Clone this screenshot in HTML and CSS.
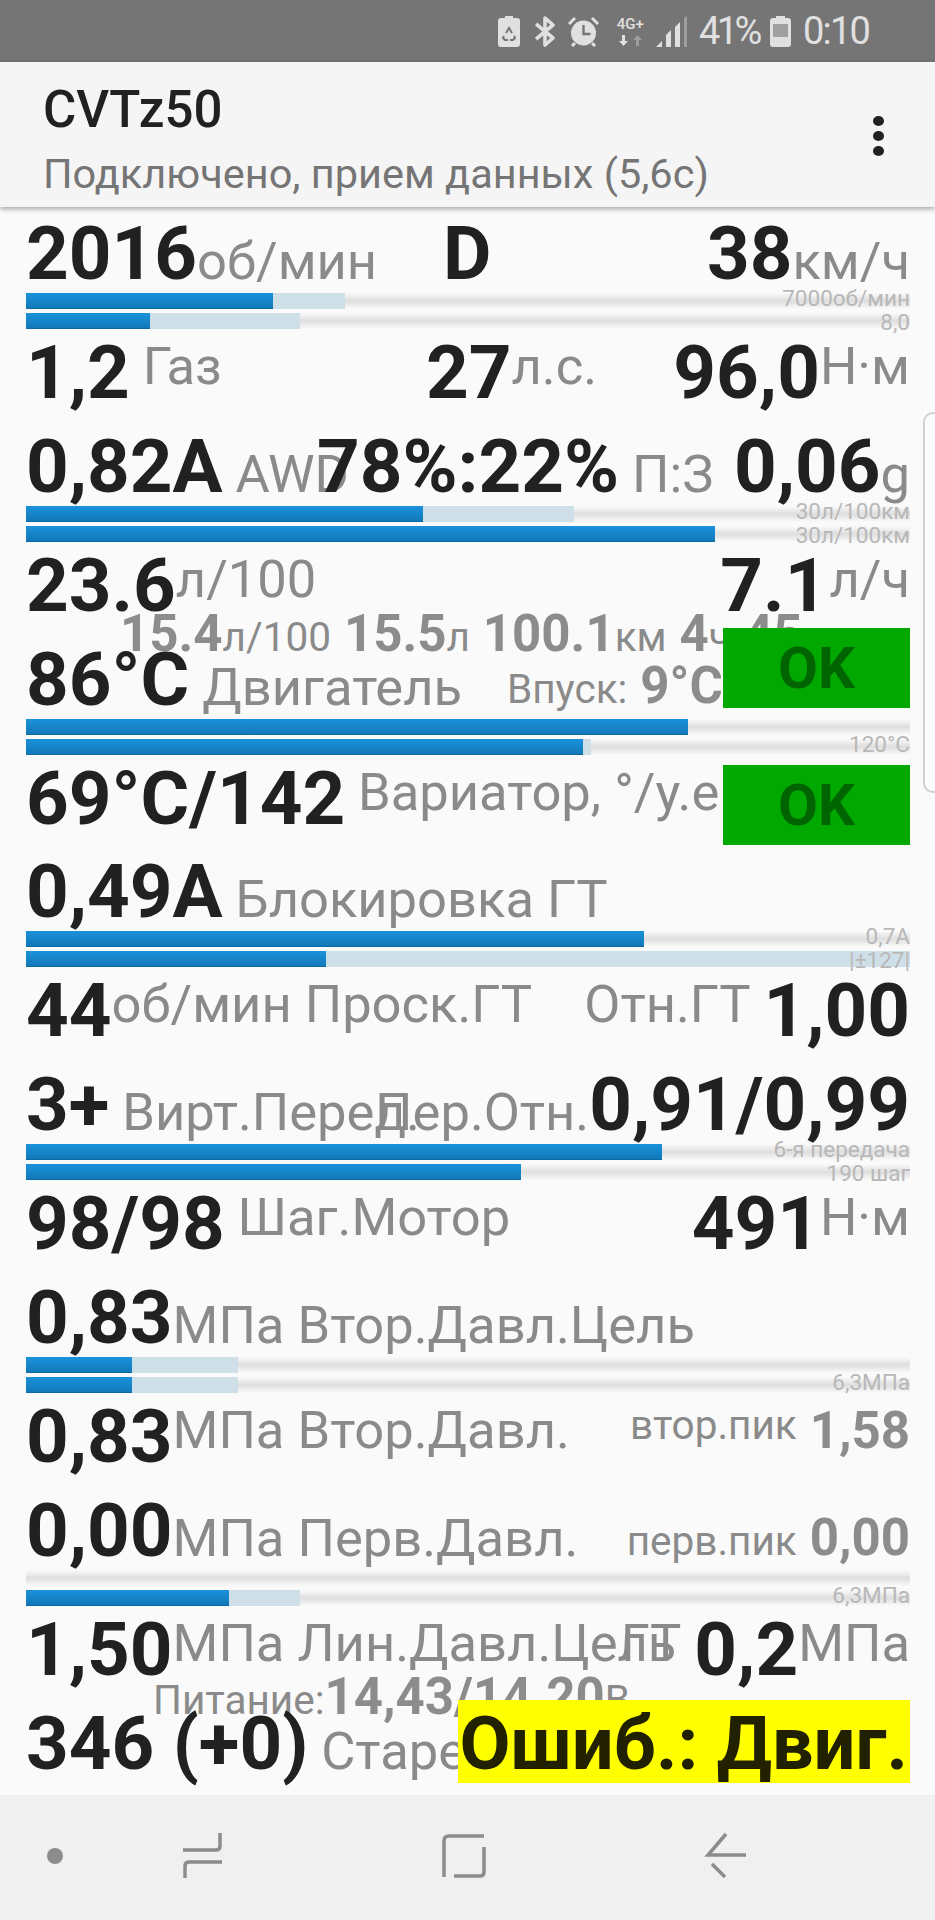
FILE: index.html
```html
<!DOCTYPE html>
<html lang="ru">
<head>
  <meta charset="UTF-8">
  <meta name="viewport" content="width=device-width, initial-scale=1.0">
  <title>CVTz50</title>
  <link rel="stylesheet" href="styles.css">
</head>
<body>
  <div class="statusbar">
    <svg class="st-recycle" width="22" height="31" viewBox="0 0 22 31">
      <path fill="#e0e0e0" d="M7 0h8v2h4q3 0 3 3v23q0 3-3 3H3q-3 0-3-3V5q0-3 3-3h4z"/>
      <path fill="none" stroke="#757575" stroke-width="2" d="M8 17l3-5 3 5M6 20l-1 2 2 2h3M16 20l1 2-2 2h-3"/>
    </svg>
    <svg class="st-bt" width="20" height="31" viewBox="0 0 20 31">
      <path fill="none" stroke="#e0e0e0" stroke-width="3.6" stroke-linejoin="round" d="M1 8l17 14-8 7V2l8 7L1 23"/>
    </svg>
    <svg class="st-alarm" width="31" height="31" viewBox="0 0 31 31">
      <circle cx="15.5" cy="17" r="12.5" fill="#e0e0e0"/>
      <path fill="none" stroke="#e0e0e0" stroke-width="3" d="M1 8l6-6M30 8l-6-6M4 30l3-3M27 30l-3-3"/>
      <path fill="none" stroke="#757575" stroke-width="2.4" d="M15.5 9v9h7"/>
    </svg>
    <div class="st-net">
      <span class="st-net-label">4G+</span>
      <svg width="24" height="11" viewBox="0 0 24 11">
        <path fill="#e0e0e0" d="M4 0h3v6h3l-4.500 5L1 6h3z"/>
        <path fill="#9e9e9e" d="M18 11h3V5h3l-4.500-5L15 5h3z"/>
      </svg>
    </div>
    <svg class="st-signal" width="31" height="31" viewBox="0 0 31 31">
      <path fill="#e0e0e0" d="M0 31l6-6v6zM10 31V19l5-5v17zM19 31V11l5-5v25z"/>
      <path fill="#9e9e9e" d="M28 31V2l3-2v31z"/>
    </svg>
    <span class="st-text st-pct">41%</span>
    <svg class="st-batt" width="21" height="31" viewBox="0 0 21 31">
      <path fill="#e0e0e0" d="M6 0h9v2h3q3 0 3 3v23q0 3-3 3H3q-3 0-3-3V5q0-3 3-3h3z"/>
      <rect x="3" y="8" width="15" height="13" fill="#a0a0a0"/>
    </svg>
    <span class="st-text st-time">0:10</span>
  </div>

  <header class="appbar">
    <div class="app-titles">
      <div class="app-title">CVTz50</div>
      <div class="app-sub">Подключено, прием данных (5,6с)</div>
    </div>
    <div class="menu-dots"><i></i><i></i><i></i></div>
  </header>

  <main class="board">
    <div class="row">
      <div class="cell"><b class="val">2016</b><span class="unit">об/мин</span></div>
      <div class="cell gear"><b class="val">D</b></div>
      <div class="cell right"><b class="val">38</b><span class="unit">км/ч</span></div>
    </div>
    <div class="bars">
      <div class="bar"><div class="bar-second" style="width:36.1%"></div><div class="bar-fill" style="width:27.9%"></div><span class="bar-label">7000об/мин</span></div>
      <div class="bar"><div class="bar-second" style="width:31%"></div><div class="bar-fill" style="width:14%"></div><span class="bar-label low">8,0</span></div>
    </div>

    <div class="row gap up">
      <div class="cell"><b class="val">1,2</b> <span class="unit">Газ</span></div>
      <div class="cell power"><b class="val">27</b><span class="unit">л.с.</span></div>
      <div class="cell right"><b class="val">96,0</b><span class="unit">Н·м</span></div>
    </div>

    <div class="row">
      <div class="cell"><b class="val">0,82A</b> <span class="unit">AWD</span></div>
      <div class="cell split"><b class="val">78%:22%</b> <span class="unit">П:З</span></div>
      <div class="cell right"><b class="val">0,06</b><span class="unit">g</span></div>
    </div>
    <div class="bars">
      <div class="bar"><div class="bar-second" style="width:62%"></div><div class="bar-fill" style="width:44.9%"></div><span class="bar-label">30л/100км</span></div>
      <div class="bar"><div class="bar-fill" style="width:77.9%"></div><span class="bar-label low">30л/100км</span></div>
    </div>

    <div class="row gap up">
      <div class="cell"><b class="val">23.6</b><span class="unit">л/100</span></div>
      <div class="cell right"><b class="val">7.1</b><span class="unit tight">л/ч</span></div>
      <div class="cell trip"><b class="val-sm">15.4</b><span class="unit-sm">л/100</span> <b class="val-sm">15.5</b><span class="unit-sm">л</span> <b class="val-sm">100.1</b><span class="unit-sm">км</span> <b class="val-sm">4</b><span class="unit-sm">ч</span> <b class="val-sm">45</b></div>
    </div>

    <div class="row">
      <div class="cell"><b class="val">86°C</b> <span class="unit">Двигатель</span></div>
      <div class="cell intake"><span class="unit-sm">Впуск:</span> <b class="val-sm">9°C</b></div>
      <div class="status-ok first">OK</div>
    </div>
    <div class="bars">
      <div class="bar"><div class="bar-fill" style="width:74.9%"></div></div>
      <div class="bar"><div class="bar-second" style="width:63.9%"></div><div class="bar-fill" style="width:63%"></div><span class="bar-label">120°C</span></div>
    </div>

    <div class="row gap up">
      <div class="cell"><b class="val">69°C/142</b> <span class="unit">Вариатор, °/у.е</span></div>
      <div class="status-ok second">OK</div>
    </div>

    <div class="row">
      <div class="cell"><b class="val">0,49A</b> <span class="unit">Блокировка ГТ</span></div>
    </div>
    <div class="bars">
      <div class="bar"><div class="bar-fill" style="width:69.9%"></div><span class="bar-label">0,7A</span></div>
      <div class="bar"><div class="bar-second" style="width:100%"></div><div class="bar-fill" style="width:33.9%"></div><span class="bar-label low">|±127|</span></div>
    </div>

    <div class="row gap up">
      <div class="cell"><b class="val">44</b><span class="unit">об/мин Проск.ГТ</span></div>
      <div class="cell right"><span class="unit">Отн.ГТ</span> <b class="val">1,00</b></div>
    </div>

    <div class="row">
      <div class="cell"><b class="val">3+</b> <span class="unit">Вирт.Перед.</span></div>
      <div class="cell right"><span class="unit">Пер.Отн.</span><b class="val">0,91/0,99</b></div>
    </div>
    <div class="bars">
      <div class="bar"><div class="bar-fill" style="width:71.9%"></div><span class="bar-label">6-я передача</span></div>
      <div class="bar"><div class="bar-fill" style="width:56%"></div><span class="bar-label low">190 шаг</span></div>
    </div>

    <div class="row gap up">
      <div class="cell"><b class="val">98/98</b> <span class="unit">Шаг.Мотор</span></div>
      <div class="cell right"><b class="val">491</b><span class="unit">Н·м</span></div>
    </div>

    <div class="row">
      <div class="cell"><b class="val">0,83</b><span class="unit">МПа Втор.Давл.Цель</span></div>
    </div>
    <div class="bars">
      <div class="bar"><div class="bar-second" style="width:24%"></div><div class="bar-fill" style="width:12%"></div></div>
      <div class="bar"><div class="bar-second" style="width:24%"></div><div class="bar-fill" style="width:12%"></div><span class="bar-label">6,3МПа</span></div>
    </div>

    <div class="row gap up">
      <div class="cell"><b class="val">0,83</b><span class="unit">МПа Втор.Давл.</span></div>
      <div class="cell right peak-up"><span class="unit-sm">втор.пик</span> <b class="val-sm">1,58</b></div>
    </div>

    <div class="row">
      <div class="cell"><b class="val">0,00</b><span class="unit">МПа Перв.Давл.</span></div>
      <div class="cell right peak-low"><span class="unit-sm">перв.пик</span> <b class="val-sm">0,00</b></div>
    </div>
    <div class="bars">
      <div class="bar"></div>
      <div class="bar"><div class="bar-second" style="width:31%"></div><div class="bar-fill" style="width:23%"></div><span class="bar-label">6,3МПа</span></div>
    </div>

    <div class="row gap up">
      <div class="cell"><b class="val">1,50</b><span class="unit">МПа Лин.Давл.Цель</span></div>
      <div class="cell right"><span class="unit">ГТ</span> <b class="val">0,2</b><span class="unit">МПа</span></div>
      <div class="cell power-line"><span class="unit-sm">Питание:</span><b class="val-sm">14,43/14.20</b><span class="unit-sm">В</span></div>
    </div>

    <div class="row">
      <div class="cell"><b class="val">346 (+0)</b> <span class="unit">Старение</span></div>
      <div class="status-err">Ошиб.: Двиг.</div>
    </div>
  </main>

  <div class="edge-handle"></div>

  <nav class="navbar">
    <svg width="935" height="125" viewBox="0 0 935 125">
      <circle cx="55" cy="61" r="8" fill="#8c8c8c"/>
      <g fill="none" stroke="#8c8c8c" stroke-width="3.500">
        <path d="M220 38V51q0 4-4 4H183M222 67H189q-4 0-4 4V83"/>
        <path d="M444 82V46q0-5 5-5H484M484 52V77q0 4-4 4H454"/>
        <path d="M726 39L708 60H746M712 69L725 82"/>
      </g>
    </svg>
  </nav>
</body>
</html>
```

FILE: styles.css
```css
* {
  box-sizing: border-box;
}
html, body {
  margin: 0;
  padding: 0;
}
body {
  width: 935px;
  height: 1920px;
  overflow: hidden;
  position: relative;
  display: flex;
  flex-direction: column;
  font-family: Roboto, "Liberation Sans", sans-serif;
  background: #fafafa;
  color: #212121;
}

/* status bar */
.statusbar {
  height: 62px;
  background: #757575;
  display: flex;
  align-items: center;
  justify-content: flex-end;
  padding: 0 66px 0 0;
  color: #e0e0e0;
}
.statusbar > * { flex-shrink: 0; }
.st-recycle { margin-right: 15px; }
.st-bt { margin-right: 13px; }
.st-alarm { margin-right: 15px; }
.st-net {
  width: 33px;
  margin-right: 9px;
  display: flex;
  flex-direction: column;
  align-items: center;
  gap: 4px;
}
.st-net-label {
  font-size: 15px;
  line-height: 14px;
  font-weight: 500;
}
.st-signal { margin-right: 12px; }
.st-text {
  font-size: 38px;
  line-height: 62px;
  letter-spacing: -1.8px;
}
.st-pct {
  margin-right: 11px;
  letter-spacing: -3.5px;
}
.st-batt { margin-right: 12px; }

/* app bar */
.appbar {
  height: 145px;
  background: #f5f5f5;
  box-shadow: 0 2px 5px rgba(0, 0, 0, 0.35);
  padding: 0 51px 0 43px;
  display: flex;
  justify-content: space-between;
  align-items: center;
  position: relative;
  z-index: 2;
}
.app-titles {
  padding-top: 7px;
}
.app-title {
  font-size: 51px;
  font-weight: 500;
  line-height: 64px;
  margin-top: 3px;
}
.app-sub {
  font-size: 41.5px;
  line-height: 56px;
  color: #757575;
  margin-top: 4px;
}
.menu-dots {
  display: flex;
  flex-direction: column;
  gap: 5px;
  margin-top: 2px;
}
.menu-dots i {
  display: block;
  width: 11px;
  height: 10px;
  border-radius: 50%;
  background: #212121;
}

/* board */
.board {
  flex: 1;
  padding: 3px 25px 0 26px;
}
.row {
  display: grid;
  height: 83px;
}
.row.gap {
  margin-bottom: 10.8px;
}
.cell {
  grid-area: 1 / 1;
  justify-self: start;
  white-space: nowrap;
  line-height: 87px;
  font-size: 52px;
}
.cell.right { justify-self: end; }
.gear { margin-left: 417px; }
.power { margin-left: 400px; }
.split { margin-left: 291px; }
.intake { margin-left: 481px; }
.trip {
  margin-left: 94px;
  margin-top: 48px;
}
.power-line {
  margin-left: 127px;
  margin-top: 47px;
}
.val {
  font-size: 74.5px;
  font-weight: 700;
  color: #212121;
}
.unit {
  font-size: 52.5px;
  line-height: 1;
  color: #8a8a8a;
}
.up .unit {
  vertical-align: 14px;
}
.unit.tight {
  margin-left: 2px;
}
.val-sm {
  font-size: 51px;
  font-weight: 700;
  line-height: 1;
  color: #8c8c8c;
}
.unit-sm {
  font-size: 40.5px;
  line-height: 1;
  color: #8a8a8a;
}
.intake .unit-sm,
.intake .val-sm {
  vertical-align: -6px;
}
.peak-up .unit-sm {
  vertical-align: 15px;
}
.peak-up .val-sm {
  vertical-align: 6px;
}
.peak-low .unit-sm,
.peak-low .val-sm {
  vertical-align: -7px;
}

/* status blocks */
.status-ok {
  grid-area: 1 / 1;
  justify-self: end;
  width: 187px;
  height: 80px;
  background: #00a800;
  color: #006400;
  font-size: 58px;
  font-weight: 700;
  line-height: 80px;
  text-align: center;
}
.status-ok.first { margin-top: -8px; }
.status-ok.second { margin-top: 10px; }
.status-err {
  grid-area: 1 / 1;
  justify-self: end;
  height: 83px;
  padding: 0 2px;
  background: #ffff00;
  color: #212100;
  font-size: 74px;
  font-weight: 700;
  line-height: 87px;
  white-space: nowrap;
}

/* bars */
.bars {
  display: flex;
  flex-direction: column;
  gap: 4px;
}
.bar {
  position: relative;
  height: 16px;
  background: linear-gradient(to bottom, rgba(0, 0, 0, 0), #dedede 50%, rgba(0, 0, 0, 0));
}
.bar-fill,
.bar-second {
  position: absolute;
  left: 0;
  top: 0;
  bottom: 0;
}
.bar-fill {
  background: linear-gradient(to bottom, #1b92dc, #1179b8);
  border-bottom: 1px solid #0c6aa2;
}
.bar-second {
  background: #cfdfe8;
}
.bar-label {
  position: absolute;
  right: 0;
  bottom: 0;
  font-size: 22.5px;
  line-height: 22px;
  color: #b8b8b8;
  white-space: nowrap;
}
.bar-label.low {
  bottom: -4px;
}

/* side handle */
.edge-handle {
  position: absolute;
  left: 923px;
  top: 412px;
  width: 20px;
  height: 381px;
  border: 2px solid #d0d0d0;
  border-radius: 14px;
  background: #fcfcfc;
}

/* nav bar */
.navbar {
  height: 125px;
  background: #f0f0f0;
}
.navbar svg {
  display: block;
}
```
